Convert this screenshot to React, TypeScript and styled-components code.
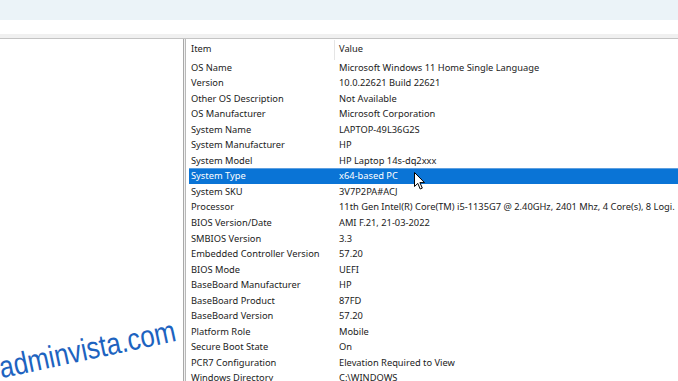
import React from 'react'
import styled, { createGlobalStyle } from 'styled-components'

const Global = createGlobalStyle`
    html, body {
        margin: 0;
        padding: 0;
        background: #ffffff;
    }
    body {
        font-family: "Noto Sans", "Open Sans", sans-serif;
    }
`

const Page = styled.div`
    position: relative;
    width: 678px;
    height: 381px;
    overflow: hidden;
    display: flex;
    flex-direction: column;
    background: #ffffff;
`
const TopBand = styled.div`
    height: 20px;
    background: #ebf3f8;
`
const MenuSpace = styled.div`
    height: 14px;
    background: #ffffff;
`
const Divider = styled.div`
    height: 4px;
    background: #f0f0f0;
    border-bottom: 1px solid #c4c4c4;
`
const Main = styled.div`
    flex: 1;
    display: flex;
    background: #f0f0f0;
    min-height: 0;
`
const TreePane = styled.div`
    width: 183px;
    background: #ffffff;
    border-right: 1px solid #a8a8a8;
`
const ListPane = styled.div`
    flex: 1;
    margin-left: 1px;
    background: #ffffff;
    border-left: 1px solid #b8b8b8;
    padding-left: 3px;
    padding-top: 1px;
    overflow: hidden;
`
const Header = styled.div`
    display: flex;
    height: 19.5px;
    font-size: 9.3px;
    color: #1b1b1b;
`
const HeadCell = styled.div<{ $w?: number }>`
    width: ${p => (p.$w ? p.$w + 'px' : 'auto')};
    flex: ${p => (p.$w ? 'none' : '1')};
    padding-left: ${p => (p.$w ? '2px' : '4px')};
    box-sizing: border-box;
    line-height: 18px;
    border-right: ${p => (p.$w ? '1px solid #e5e5e5' : 'none')};
    white-space: nowrap;
`
const Row = styled.div<{ $sel?: boolean }>`
    display: flex;
    height: 15.55px;
    line-height: 15.55px;
    font-size: 9.3px;
    white-space: nowrap;
    color: ${p => (p.$sel ? '#ffffff' : '#1b1b1b')};
    background: ${p => (p.$sel ? '#0a74d6' : 'transparent')};
    box-shadow: ${p => (p.$sel ? 'inset 0 1px 0 #5d9fe0' : 'none')};
`
const ItemCell = styled.div`
    width: 146px;
    flex: none;
    padding-left: 2px;
    box-sizing: border-box;
    overflow: hidden;
`
const ValueCell = styled.div`
    flex: 1;
    padding-left: 4px;
    overflow: hidden;
`
const Watermark = styled.div`
    position: absolute;
    left: 3px;
    top: 351px;
    height: 34px;
    line-height: 34px;
    font-family: "Liberation Sans", Arial, sans-serif;
    font-size: 31px;
    color: #1d63c0;
    transform: rotate(-12deg) scaleX(0.835);
    transform-origin: left bottom;
    white-space: nowrap;
`
const Pointer = styled.svg`
    position: absolute;
    left: 414px;
    top: 172px;
`

const rows: [string, string][] = [
    ['OS Name', 'Microsoft Windows 11 Home Single Language'],
    ['Version', '10.0.22621 Build 22621'],
    ['Other OS Description', 'Not Available'],
    ['OS Manufacturer', 'Microsoft Corporation'],
    ['System Name', 'LAPTOP-49L36G2S'],
    ['System Manufacturer', 'HP'],
    ['System Model', 'HP Laptop 14s-dq2xxx'],
    ['System Type', 'x64-based PC'],
    ['System SKU', '3V7P2PA#ACJ'],
    ['Processor', '11th Gen Intel(R) Core(TM) i5-1135G7 @ 2.40GHz, 2401 Mhz, 4 Core(s), 8 Logi.'],
    ['BIOS Version/Date', 'AMI F.21, 21-03-2022'],
    ['SMBIOS Version', '3.3'],
    ['Embedded Controller Version', '57.20'],
    ['BIOS Mode', 'UEFI'],
    ['BaseBoard Manufacturer', 'HP'],
    ['BaseBoard Product', '87FD'],
    ['BaseBoard Version', '57.20'],
    ['Platform Role', 'Mobile'],
    ['Secure Boot State', 'On'],
    ['PCR7 Configuration', 'Elevation Required to View'],
    ['Windows Directory', 'C:\\WINDOWS'],
]

const App: React.FC = () => {
    return (
        <Page>
            <Global />
            <TopBand />
            <MenuSpace />
            <Divider />
            <Main>
                <TreePane />
                <ListPane>
                    <Header>
                        <HeadCell $w={146}>Item</HeadCell>
                        <HeadCell>Value</HeadCell>
                    </Header>
                    {rows.map(([item, value]) => (
                        <Row key={item} $sel={item === 'System Type'}>
                            <ItemCell>{item}</ItemCell>
                            <ValueCell>{value}</ValueCell>
                        </Row>
                    ))}
                </ListPane>
            </Main>
            <Watermark>adminvista.com</Watermark>
            <Pointer width="12" height="19" viewBox="0 0 12 19">
                <path d="M0.5 0.5 L0.5 14.5 L3.8 11.4 L6.2 17 L8.3 16.1 L5.9 10.6 L10.5 10.6 Z" fill="#ffffff" stroke="#000000" strokeWidth="1" strokeLinejoin="round" />
            </Pointer>
        </Page>
    )
}

export default App
